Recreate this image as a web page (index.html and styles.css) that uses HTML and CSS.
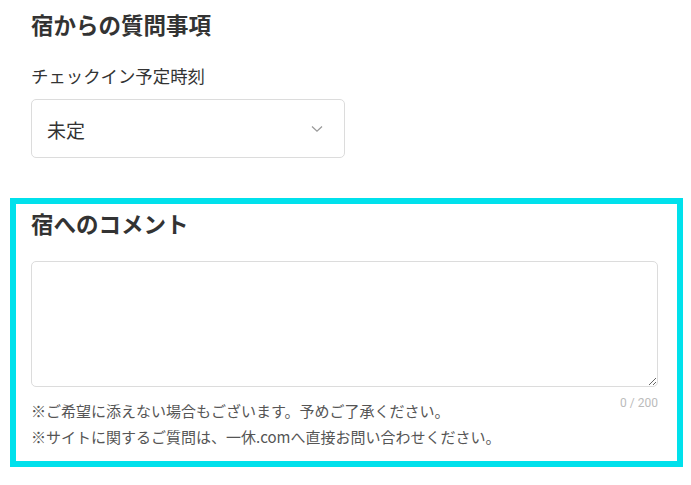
FILE: index.html
```html
<!DOCTYPE html>
<html lang="ja">
<head>
<meta charset="utf-8">
<link rel="stylesheet" href="styles.css">
</head>
<body>
<div class="page">
  <section class="questions">
    <h2 class="title">宿からの質問事項</h2>
    <div class="label">チェックイン予定時刻</div>
    <div class="select">
      <span class="select-value">未定</span>
      <svg class="chevron" width="12" height="8" viewBox="0 0 12 8"><path d="M1 1.5 L6 6.2 L11 1.5" fill="none" stroke="#9a9a9a" stroke-width="1.3"/></svg>
    </div>
  </section>
  <section class="comment">
    <h2 class="title">宿へのコメント</h2>
    <textarea class="textarea"></textarea>
    <div class="foot">
      <div class="notes">
        <p>※ご希望に添えない場合もございます。予めご了承ください。</p>
        <p>※サイトに関するご質問は、一休.comへ直接お問い合わせください。</p>
      </div>
      <div class="counter">0 / 200</div>
    </div>
  </section>
</div>
</body>
</html>
```
FILE: styles.css
```css
html, body {
  margin: 0;
  padding: 0;
  background: #fff;
}
body {
  font-family: "Noto Sans CJK JP", "Noto Sans", sans-serif;
  color: #333;
}
.page {
  padding-top: 9px;
}
.questions {
  padding-left: 31px;
}
.title {
  margin: 0;
  font-size: 22.5px;
  line-height: 30px;
  font-weight: 700;
  color: #333;
}
.label {
  margin-top: 25px;
  font-size: 17.4px;
  line-height: 24px;
  color: #333;
}
.select {
  margin-top: 11px;
  width: 276px;
  height: 57px;
  border: 1px solid #dcdcdc;
  border-radius: 5px;
  display: flex;
  align-items: center;
  justify-content: space-between;
  padding: 0 21px 0 15px;
  box-sizing: content-box;
}
.select-value {
  font-size: 19px;
  line-height: 26px;
  color: #333;
  padding-top: 2px;
}
.chevron {
  display: block;
}
.comment {
  margin: 40px 0 0 10px;
  width: 673px;
  box-sizing: border-box;
  border: 6px solid #00e1ec;
  padding: 4px 19px 11px 15px;
}
.textarea {
  display: block;
  margin: 23px 0 0 0;
  width: 100%;
  height: 126px;
  box-sizing: border-box;
  border: 1px solid #dcdcdc;
  border-radius: 5px;
  resize: vertical;
  font-family: inherit;
}
.foot {
  display: flex;
  align-items: flex-start;
}
.notes {
  flex: 1;
  padding-top: 11px;
}
.notes p {
  margin: 0;
  font-size: 15px;
  line-height: 26px;
  color: #555;
}
.counter {
  flex: none;
  margin-top: 9px;
  font-size: 12px;
  line-height: 14px;
  color: #bbb;
  font-family: "Roboto", "Noto Sans", sans-serif;
}
```
